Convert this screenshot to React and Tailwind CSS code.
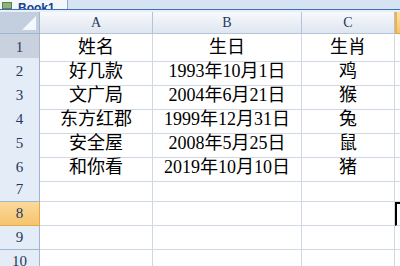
export default function App() {
  const rows = [
    ["姓名", "生日", "生肖"],
    ["好几款", "1993年10月1日", "鸡"],
    ["文广局", "2004年6月21日", "猴"],
    ["东方红郡", "1999年12月31日", "兔"],
    ["安全屋", "2008年5月25日", "鼠"],
    ["和你看", "2019年10月10日", "猪"],
    ["", "", ""],
    ["", "", ""],
    ["", "", ""],
    ["", "", ""],
  ];
  const font = { fontFamily: '"Liberation Serif", "Noto Sans CJK SC", serif' };
  return (
    <div className="w-[400px] h-[266px] overflow-hidden bg-white" style={font}>
      {/* tab strip */}
      <div className="h-[9px] bg-[#d6e3f3] flex">
        <div className="w-[68px] h-[9px] bg-[#f4f7fb] border-r border-[#8ea8cc] flex items-end overflow-hidden">
          <div className="w-[10px] h-[7px] ml-[2px] bg-[#8fb479] border border-[#5f7f48]" />
          <span className="ml-[6px] text-[12px] font-bold leading-[12px] mb-[-5px] text-[#15428b]" style={{ fontFamily: '"Liberation Sans", sans-serif' }}>Book1</span>
        </div>
      </div>
      <div className="h-[1px] bg-[#3d6fc0]" />
      <div className="h-[2px] bg-[#e9eff8]" />
      {/* header row */}
      <div className="grid grid-cols-[40px_113px_149px_93px_1fr] h-[22px]">
        <div className="bg-[#c3cfdf] border-r border-b border-[#9eb6ce] relative overflow-hidden">
          <div className="absolute right-[3px] bottom-[3px] w-0 h-0 border-l-[14px] border-l-transparent border-b-[14px] border-b-[#f4f7fb]" />
        </div>
        {["A", "B", "C"].map((c) => (
          <div key={c} className="bg-gradient-to-b from-[#f7f9fc] to-[#dfe6f0] border-r border-b border-[#b4c3d6] flex items-center justify-center text-[14px] text-[#1e395b]">
            {c}
          </div>
        ))}
        <div className="bg-gradient-to-b from-[#fbe3a8] to-[#f4c56a] border-b border-[#d9a440] border-l-2 border-l-[#f0b04c]" />
      </div>
      {rows.map((r, i) => {
        const n = i + 1;
        const sel = n === 8;
        const first = n === 1;
        return (
          <div key={n} className="grid grid-cols-[40px_113px_149px_93px_1fr] h-[24px]">
            <div
              className={
                "border-r border-b flex items-center justify-center text-[15px] text-[#1e395b] " +
                (sel
                  ? "bg-gradient-to-b from-[#fbd99c] to-[#f5c56d] border-[#e4a84a]"
                  : first
                  ? "bg-[#c8d1dd] border-[#a8b8cc]"
                  : "bg-[#e4ecf7] border-[#9eb6ce]")
              }
            >
              {n}
            </div>
            {r.map((t, j) => (
              <div key={j} className="border-r border-b border-[#d0d7e5] flex items-center justify-center text-[18px] text-black whitespace-nowrap">
                {t}
              </div>
            ))}
            <div className={"border-b border-[#d0d7e5] " + (sel ? "border-l-2 border-l-black border-t-2 border-t-black" : "")} />
          </div>
        );
      })}
    </div>
  );
}
